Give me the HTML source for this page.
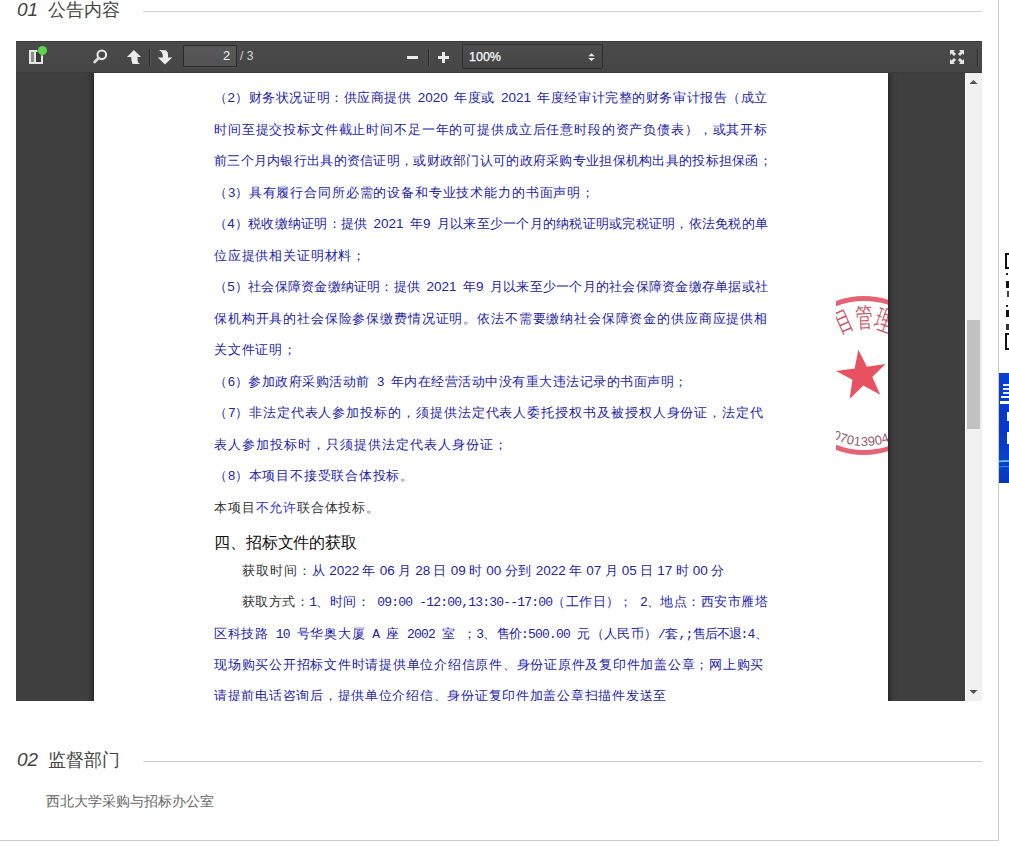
<!DOCTYPE html>
<html><head><meta charset="utf-8">
<style>
*{margin:0;padding:0;box-sizing:border-box}
html,body{width:1009px;height:847px;overflow:hidden;background:#fff;font-family:"Liberation Sans",sans-serif}
.abs{position:absolute}
.h-num{position:absolute;font-style:italic;font-size:19px;color:#444;line-height:20px}
.h-txt{position:absolute;font-size:18px;color:#444;line-height:20px}
.h-line{position:absolute;height:1px;background:#d0d0d0}
#viewer{position:absolute;left:16px;top:41px;width:966px;height:660px;background:#3f3f3f;overflow:hidden}
#toolbar{position:absolute;left:0;top:0;width:966px;height:32px;background:linear-gradient(#4a4a4a,#464646);box-shadow:inset 0 1px 0 #3c3c3c,inset 0 -1px 0 #3a3a3a}
#page{position:absolute;left:78px;top:32px;width:794px;height:700px;background:#fff;overflow:hidden;box-shadow:0 0 6px 1px rgba(0,0,0,.55)}
#sb{position:absolute;left:949px;top:32px;width:17px;height:628px;background:#f1f1f1;border-left:1px solid #fafafa}
#thumb{position:absolute;left:1px;top:247px;width:13px;height:109px;background:#c1c1c1}
.ln{position:absolute;white-space:nowrap;font-size:13px;line-height:20px;color:#2424a8;font-weight:300}
.j{white-space:normal;overflow:hidden;height:20px}
.k{color:#333}
.a{font-family:"Liberation Mono",monospace;font-size:13px;letter-spacing:-0.8px}
.n{font-size:12.5px;letter-spacing:-1px}
.a3{font-size:13.5px;letter-spacing:0;word-spacing:2.5px}
.a2{font-size:13.5px;letter-spacing:0;word-spacing:-0.5px}
.b2{color:#3333cc}
.sep{position:absolute;top:8px;width:1px;height:17px;background:#2a2a2a;box-shadow:1px 0 0 rgba(255,255,255,.08)}
</style></head>
<body>
<!-- page borders -->
<div class="abs" style="left:998px;top:0;width:1px;height:841px;background:#ccc"></div>
<div class="abs" style="left:0;top:840px;width:999px;height:1px;background:#ccc"></div>

<!-- right cropped sidebar fragments -->
<div class="abs" style="left:1005px;top:253px;width:4px;height:98px;overflow:hidden">
  <div class="abs" style="left:0;top:0;width:8px;height:16px;border:2px solid #111"></div>
  <div class="abs" style="left:1px;top:20px;width:2px;height:2px;background:#222"></div>
  <div class="abs" style="left:1px;top:28px;width:3px;height:7px;background:#111"></div>
  <div class="abs" style="left:2px;top:38px;width:2px;height:6px;background:#444"></div>
  <div class="abs" style="left:1px;top:52px;width:2px;height:2px;background:#222"></div>
  <div class="abs" style="left:1px;top:57px;width:3px;height:7px;background:#111"></div>
  <div class="abs" style="left:1px;top:71px;width:3px;height:6px;background:#333"></div>
  <div class="abs" style="left:0;top:80px;width:8px;height:17px;border:2px solid #111"></div>
</div>
<div class="abs" style="left:999px;top:373px;width:10px;height:110px;background:linear-gradient(180deg,#0b3fd0 0%,#0638c4 55%,#0a44c8 80%,#0636b8 100%);overflow:hidden">
  <div class="abs" style="left:4px;top:11px;width:6px;height:2px;background:#e8f0ff"></div>
  <div class="abs" style="left:4px;top:15px;width:6px;height:2px;background:#e8f0ff"></div>
  <div class="abs" style="left:4px;top:19px;width:6px;height:2px;background:#e8f0ff"></div>
  <div class="abs" style="left:2px;top:23px;width:8px;height:2px;background:#fff"></div>
  <div class="abs" style="left:1px;top:28px;width:9px;height:3px;background:#fff"></div>
  <div class="abs" style="left:8px;top:39px;width:2px;height:9px;background:#fff"></div>
  <div class="abs" style="left:8px;top:59px;width:2px;height:12px;background:#fff"></div>
  <div class="abs" style="left:-4px;top:87px;width:20px;height:6px;border-top:2px solid #63b8ff;border-radius:50%"></div>
  <div class="abs" style="left:-4px;top:93px;width:20px;height:6px;border-top:1px solid #3d8ef5;border-radius:50%"></div>
</div>

<!-- heading 1 -->
<div class="h-num" style="left:17px;top:-0.5px">01</div>
<div class="h-txt" style="left:48px;top:0px;width:72px;white-space:nowrap;text-align:justify;text-align-last:justify">公告内容</div>
<div class="h-line" style="left:143px;top:11px;width:839px"></div>

<div id="viewer">
  <div id="page">
<div class="ln" style="left:120px;top:15px;letter-spacing:0.570px;width:554px;text-align:justify;text-align-last:justify;">（<span class="a3">2</span>）财务状况证明：供应商提供<span class="a3"> 2020 </span>年度或<span class="a3"> 2021 </span>年度经审计完整的财务审计报告（成立</div>
<div class="ln" style="left:120px;top:47px;letter-spacing:0.850px;width:554px;text-align:justify;text-align-last:justify;">时间至提交投标文件截止时间不足一年的可提供成立后任意时段的资产负债表），或其开标</div>
<div class="ln" style="left:120px;top:78px;letter-spacing:0.286px;width:558px;text-align:justify;text-align-last:justify;">前三个月内银行出具的资信证明，或财政部门认可的政府采购专业担保机构出具的投标担保函；</div>
<div class="ln" style="left:120px;top:110px;letter-spacing:0.851px;width:381px;text-align:justify;text-align-last:justify;">（<span class="a">3</span>）具有履行合同所必需的设备和专业技术能力的书面声明；</div>
<div class="ln" style="left:120px;top:141px;letter-spacing:0.248px;width:554px;text-align:justify;text-align-last:justify;">（<span class="a3">4</span>）税收缴纳证明：提供<span class="a3"> 2021 </span>年<span class="a3">9 </span>月以来至少一个月的纳税证明或完税证明，依法免税的单</div>
<div class="ln" style="left:120px;top:173px;letter-spacing:0.818px;width:152px;text-align:justify;text-align-last:justify;">位应提供相关证明材料；</div>
<div class="ln" style="left:120px;top:204px;letter-spacing:0.248px;width:554px;text-align:justify;text-align-last:justify;">（<span class="a3">5</span>）社会保障资金缴纳证明：提供<span class="a3"> 2021 </span>年<span class="a3">9 </span>月以来至少一个月的社会保障资金缴存单据或社</div>
<div class="ln" style="left:120px;top:236px;letter-spacing:0.850px;width:554px;text-align:justify;text-align-last:justify;">保机构开具的社会保险参保缴费情况证明。依法不需要缴纳社会保障资金的供应商应提供相</div>
<div class="ln" style="left:120px;top:267px;letter-spacing:0.833px;width:83px;text-align:justify;text-align-last:justify;">关文件证明；</div>
<div class="ln" style="left:120px;top:299px;letter-spacing:0.514px;width:474px;text-align:justify;text-align-last:justify;">（<span class="a">6</span>）参加政府采购活动前<span class="a"> 3 </span>年内在经营活动中没有重大违法记录的书面声明；</div>
<div class="ln" style="left:120px;top:330px;letter-spacing:0.923px;width:550px;text-align:justify;text-align-last:justify;">（<span class="a">7</span>）非法定代表人参加投标的，须提供法定代表人委托授权书及被授权人身份证，法定代</div>
<div class="ln" style="left:120px;top:362px;letter-spacing:1.000px;width:294px;text-align:justify;text-align-last:justify;">表人参加投标时，只须提供法定代表人身份证；</div>
<div class="ln" style="left:120px;top:393px;letter-spacing:0.785px;width:200px;text-align:justify;text-align-last:justify;">（<span class="a">8</span>）本项目不接受联合体投标。</div>
<div class="ln" style="left:120px;top:425px;letter-spacing:0.833px;width:166px;text-align:justify;text-align-last:justify;"><span class="k">本项目</span><span class="b2">不允许</span><span class="k">联合体投标。</span></div>
<div class="ln" style="left:120px;top:460px;letter-spacing:-0.111px;width:143px;text-align:justify;text-align-last:justify;font-size:16px;color:#111;">四、招标文件的获取</div>
<div class="ln" style="left:148px;top:488px;letter-spacing:0.980px;width:483px;text-align:justify;text-align-last:justify;"><span class="k">获取时间：</span>从<span class="a2"> 2022 </span>年<span class="a2"> 06 </span>月<span class="a2"> 28 </span>日<span class="a2"> 09 </span>时<span class="a2"> 00 </span>分到<span class="a2"> 2022 </span>年<span class="a2"> 07 </span>月<span class="a2"> 05 </span>日<span class="a2"> 17 </span>时<span class="a2"> 00 </span>分</div>
<div class="ln" style="left:148px;top:519px;letter-spacing:0.455px;width:526px;text-align:justify;text-align-last:justify;"><span class="k">获取方式：</span><span class="a">1</span>、时间：<span class="a"> 09:00 -12:00,13:30--17:00</span>（工作日）；<span class="a"> 2</span>、地点：西安市雁塔</div>
<div class="ln" style="left:120px;top:551px;letter-spacing:0.686px;width:283px;text-align:justify;text-align-last:justify;">区科技路<span class="a"> 10 </span>号华奥大厦<span class="a"> A </span>座<span class="a"> 2002 </span>室<span class="a"> </span>；<span class="a">3</span>、</div>
<div class="ln" style="left:403px;top:551px;letter-spacing:0.492px;width:271px;text-align:justify;text-align-last:justify;"><span class="n">售价</span><span class="a">:500.00 </span>元（人民币）<span class="a">/</span>套<span class="a">,;</span><span class="n">售后不退</span><span class="a">:4</span>、</div>
<div class="ln" style="left:120px;top:582px;letter-spacing:0.750px;width:550px;text-align:justify;text-align-last:justify;">现场购买公开招标文件时请提供单位介绍信原件、身份证原件及复印件加盖公章；网上购买</div>
<div class="ln" style="left:120px;top:613px;letter-spacing:0.727px;width:453px;text-align:justify;text-align-last:justify;">请提前电话咨询后，提供单位介绍信、身份证复印件加盖公章扫描件发送至</div>
    <svg class="abs" style="left:742px;top:222px" width="52" height="162" viewBox="836 295 52 162">
      <defs><path id="arcB" d="M 794 375.5 A 70.5 70.5 0 0 0 935 375.5"/></defs>
      <circle cx="864" cy="375.5" r="77" fill="none" stroke="#e4566a" stroke-width="5" opacity=".92"/>
      <polygon fill="#e8515f" transform="rotate(-8 862 376)" points="862,349.5 868.2,367.5 887,367.5 872,378.5 877.5,397 862,385.5 846.5,397 852,378.5 837,367.5 855.8,367.5"/>
      <g fill="#c9586a" font-family="Liberation Serif,serif" font-size="18" text-anchor="middle">
        <text transform="translate(843.5 321) rotate(-24) scale(0.9 1.5)" dy="6.5">目</text>
        <text transform="translate(864.5 316.5) rotate(-3) scale(0.95 1.5)" dy="6.5">管</text>
        <text transform="translate(884.5 320) rotate(20) scale(0.95 1.5)" dy="6.5">理</text>
        <text transform="translate(822 331) rotate(-40) scale(0.95 1.35)" dy="6">项</text>
      </g>
      <text font-size="13" fill="#9a5a6c" font-family="Liberation Sans,sans-serif" letter-spacing="0.3"><textPath href="#arcB" startOffset="50%" text-anchor="middle">6107013904025</textPath></text>
    </svg>
  </div>
  <div id="toolbar">
    <!-- sidebar toggle -->
    <div class="abs" style="left:13px;top:9px;width:14px;height:14px;border:2px solid #e6e6e6;background:#3c3c3c"></div>
    <div class="abs" style="left:15px;top:11px;width:3px;height:10px;background:#8a8a8a"></div>
    <div class="abs" style="left:18px;top:11px;width:1.5px;height:10px;background:#e6e6e6"></div>
    <div class="abs" style="left:21.5px;top:4.5px;width:9.5px;height:9.5px;border-radius:50%;background:#5fd250;box-shadow:0 0 0 0.6px #2f5a2a"></div>
    <!-- search -->
    <svg class="abs" style="left:76px;top:6px" width="20" height="20" viewBox="0 0 20 20">
      <circle cx="9.8" cy="7.8" r="4.3" fill="none" stroke="#e8e8e8" stroke-width="2.1"/>
      <line x1="6.6" y1="11" x2="2.6" y2="15" stroke="#e0e0e0" stroke-width="2.6" stroke-linecap="round"/>
    </svg>
    <!-- up arrow -->
    <svg class="abs" style="left:110px;top:8px" width="16" height="17" viewBox="0 0 16 17">
      <path d="M7.9 1 L15.1 7.9 L11.5 7.9 L11.6 11.5 Q11.9 14.2 14.2 15.1 L6.5 15.1 Q5.3 12.5 5.2 7.9 L1 7.9 Z" fill="#ececec"/>
    </svg>
    <div class="sep" style="left:133px"></div>
    <!-- down arrow -->
    <svg class="abs" style="left:141px;top:8px" width="16" height="17" viewBox="0 0 16 17">
      <path d="M1.9 1 L8.8 1.2 Q11 2.5 11 5 L11 8.5 L15.2 8.5 L8 15.4 L0.8 8.5 L5.8 8.5 L5.7 5.5 Q5.3 2.5 1.9 1 Z" fill="#ececec"/>
    </svg>
    <!-- page number input -->
    <div class="abs" style="left:167px;top:4px;width:54px;height:22px;border:1px solid #2a2a2a;border-radius:1px;background:linear-gradient(#595959,#525252);box-shadow:0 1px 0 rgba(255,255,255,.06)"></div>
    <div class="abs" style="left:207px;top:7px;font-size:13px;line-height:16px;color:#f2f2f2">2</div>
    <div class="abs" style="left:224px;top:7px;font-size:12px;line-height:16px;color:#d9d9d9">/ 3</div>
    <!-- zoom out / in -->
    <div class="abs" style="left:391px;top:15px;width:11px;height:3px;background:#ececec"></div>
    <div class="sep" style="left:412px"></div>
    <div class="abs" style="left:422px;top:15px;width:11px;height:3px;background:#ececec"></div>
    <div class="abs" style="left:426px;top:11px;width:3px;height:11px;background:#ececec"></div>
    <!-- select -->
    <div class="abs" style="left:446px;top:3px;width:141px;height:25px;border:1px solid #2e2e2e;border-radius:2px;background:linear-gradient(#4e4e4e,#444)"></div>
    <div class="abs" style="left:453px;top:8px;font-size:12.5px;line-height:16px;color:#fafafa;-webkit-text-stroke:0.25px #fafafa">100%</div>
    <svg class="abs" style="left:571px;top:11px" width="9" height="10" viewBox="0 0 9 10">
      <path d="M4.5 1.2 L7.8 4.3 L1.2 4.3 Z M1.2 6 L7.8 6 L4.5 9.1 Z" fill="#e8e8e8"/>
    </svg>
    <!-- fullscreen -->
    <svg class="abs" style="left:933px;top:8px" width="16" height="16" viewBox="0 0 16 16">
      <g fill="#e6e6e6">
        <path d="M1 1 L6 1 L4.5 2.5 L7 5 L5 7 L2.5 4.5 L1 6 Z"/>
        <path d="M15 1 L15 6 L13.5 4.5 L11 7 L9 5 L11.5 2.5 L10 1 Z"/>
        <path d="M1 15 L1 10 L2.5 11.5 L5 9 L7 11 L4.5 13.5 L6 15 Z"/>
        <path d="M15 15 L10 15 L11.5 13.5 L9 11 L11 9 L13.5 11.5 L15 10 Z"/>
      </g>
    </svg>
    <div class="sep" style="left:961px"></div>
  </div>
  <div id="sb"><div id="thumb"></div>
    <svg class="abs" style="left:2px;top:6px" width="11" height="6" viewBox="0 0 11 6"><path d="M5.5 1 L9.5 5 L1.5 5 Z" fill="#505050"/></svg>
    <svg class="abs" style="left:2px;top:616px" width="11" height="6" viewBox="0 0 11 6"><path d="M1.5 1 L9.5 1 L5.5 5 Z" fill="#505050"/></svg>
  </div>
</div>

<!-- heading 2 -->
<div class="h-num" style="left:17px;top:749.5px">02</div>
<div class="h-txt" style="left:48px;top:750px;width:72px;white-space:nowrap;text-align:justify;text-align-last:justify">监督部门</div>
<div class="h-line" style="left:143px;top:761px;width:839px"></div>
<div class="abs" style="left:46px;top:793px;width:168px;white-space:nowrap;text-align:justify;text-align-last:justify;font-size:14px;line-height:16px;color:#666">西北大学采购与招标办公室</div>

</body></html>
